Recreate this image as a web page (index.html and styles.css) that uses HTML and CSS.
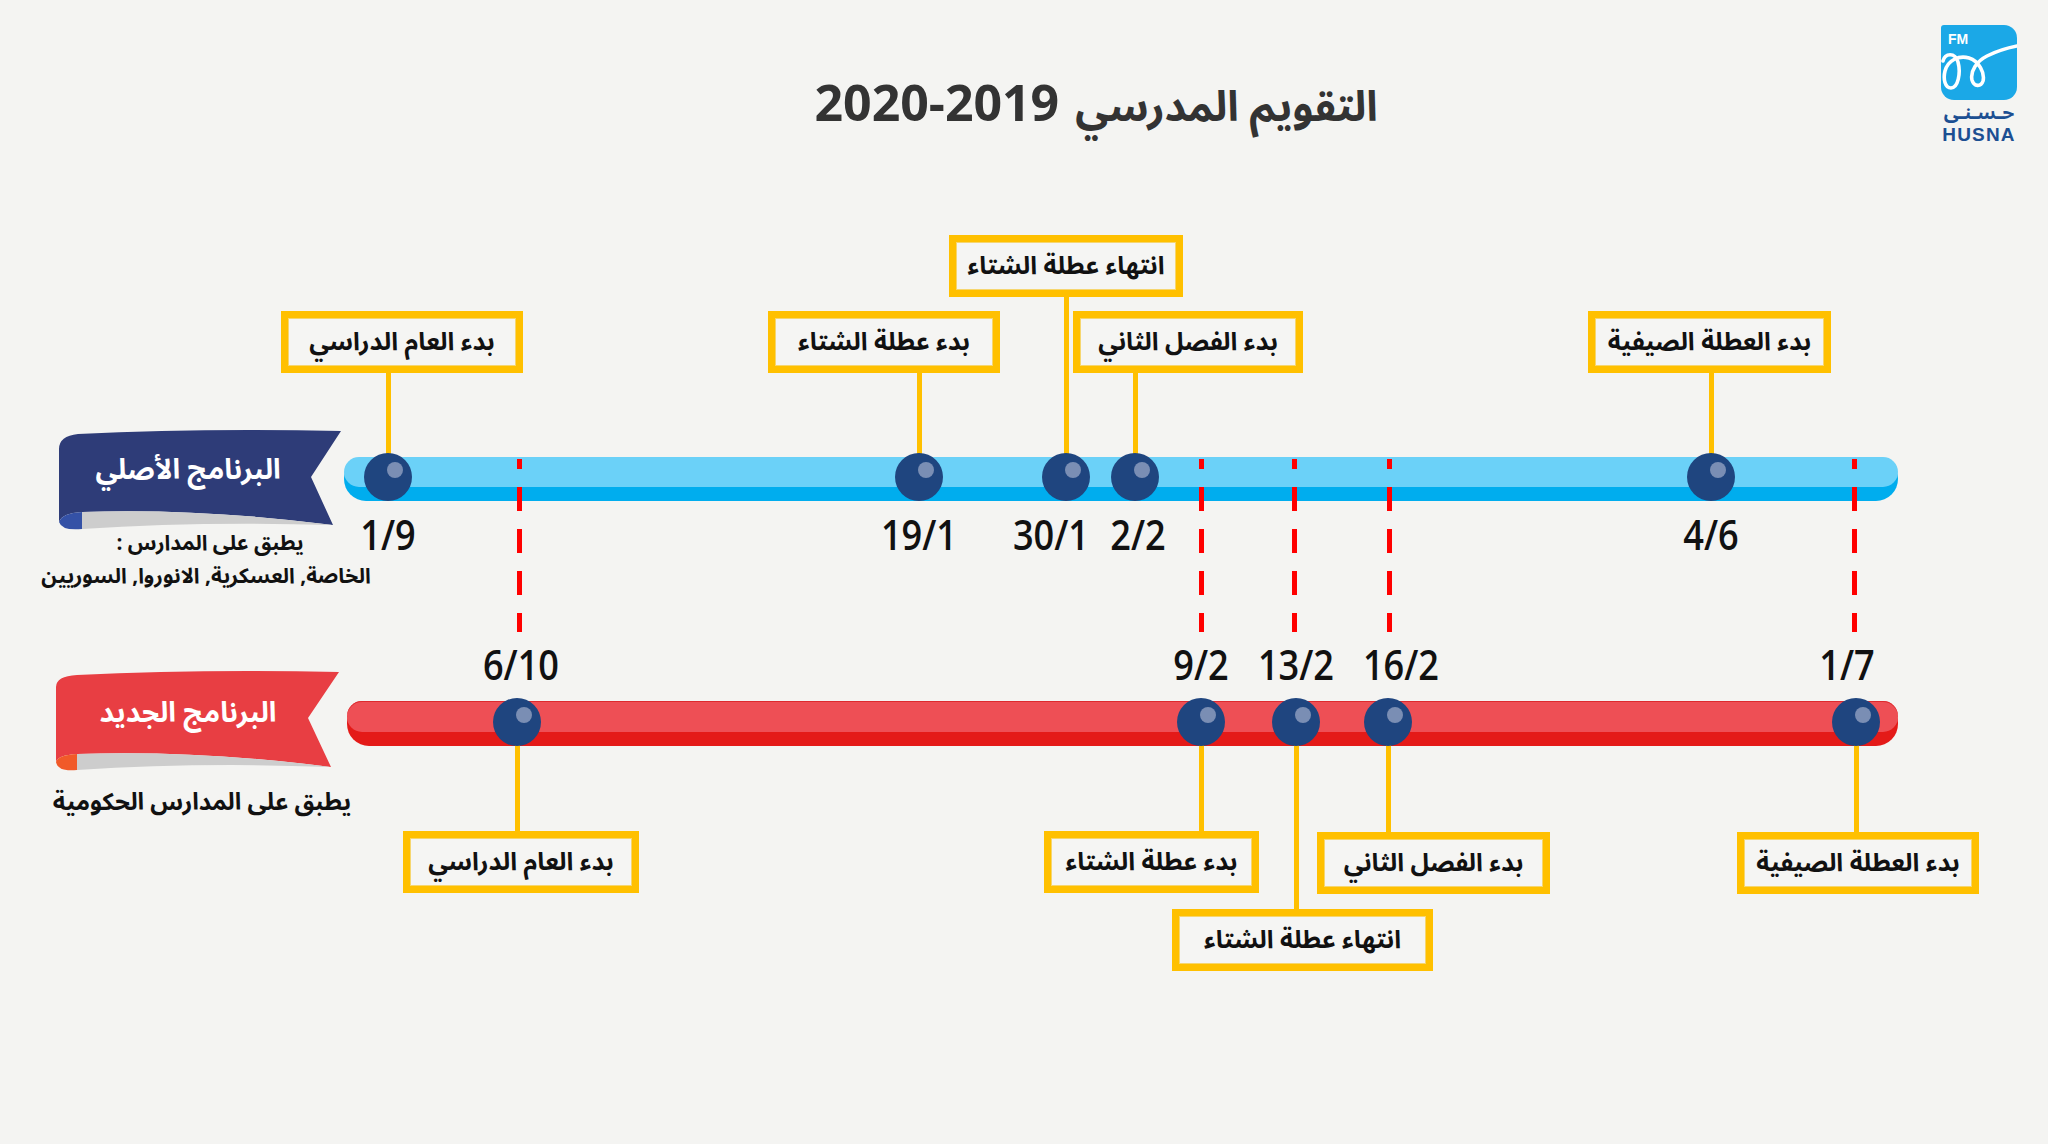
FILE: index.html
```html
<!DOCTYPE html>
<html lang="ar">
<head>
<meta charset="utf-8">
<title>التقويم المدرسي 2019-2020</title>
<link rel="stylesheet" href="styles.css">
</head>
<body>
<div class="page">
  <header class="header">
    <h1 class="title" dir="rtl"><span class="title-ar">التقويم المدرسي</span> <bdi class="title-num" dir="ltr">2020-2019</bdi></h1>
    <div class="logo">
      <div class="logo-mark">
        <span class="logo-fm">FM</span>
        <svg class="logo-loops" viewBox="0 0 76 75" aria-hidden="true">
          <path d="M2 36 C4 28 14 27 17 37 C20 48 17 63 10 63 C4 63 2 54 4 46 C7 35 18 30 28 33 C38 36 44 48 42 56 C40 62 33 62 31 55 C29 46 36 36 46 31 C56 26 66 23 76 21" fill="none" stroke="#fff" stroke-width="3.6" stroke-linecap="round"/>
        </svg>
      </div>
      <div class="logo-ar">حـسـنـى</div>
      <div class="logo-en">HUSNA</div>
    </div>
  </header>

  <main class="timeline">
    <div class="bar bar-blue"></div>
    <div class="bar bar-red"></div>

    <div class="dash d1"></div>
    <div class="dash d2"></div>
    <div class="dash d3"></div>
    <div class="dash d4"></div>
    <div class="dash d5"></div>

    <div class="ribbon ribbon-blue">
      <svg class="ribbon-svg" viewBox="50 425 300 110" aria-hidden="true">
        <path d="M59 449 Q59 436 78 434 Q200 428 341 431 L311 477 L333 525 Q200 508 82 512 Q62 513 59 522 Z" fill="#2e3c78"/>
        <path d="M82 512 Q200 508 333 525 Q200 521 82 529 Z" fill="#cdcdcd"/>
        <path d="M59 522 Q62 513 82 512 L82 529 Q62 531 59 522 Z" fill="#3451a6"/>
      </svg>
      <span class="ribbon-label">البرنامج الأصلي</span>
    </div>
    <div class="note note-blue" dir="rtl">
      <p class="note-l1">يطبق على المدارس :</p>
      <p class="note-l2">الخاصة, العسكرية, الانوروا, السوريين</p>
    </div>

    <div class="ribbon ribbon-red">
      <svg class="ribbon-svg" viewBox="50 665 300 110" aria-hidden="true">
        <path d="M56 687 Q56 676 77 675 Q200 669 339 672 L308 718 L331 767 Q200 750 77 754 Q58 755 56 762 Z" fill="#e83e43"/>
        <path d="M77 754 Q200 750 331 767 Q200 762 77 770 Z" fill="#cdcdcd"/>
        <path d="M56 762 Q58 755 77 754 L77 770 Q58 772 56 762 Z" fill="#f15a29"/>
      </svg>
      <span class="ribbon-label">البرنامج الجديد</span>
    </div>
    <div class="note note-red" dir="rtl">
      <p>يطبق على المدارس الحكومية</p>
    </div>

    <div class="mk top t1"><div class="stem"></div><div class="tag" dir="rtl">بدء العام الدراسي</div><div class="dot"></div><div class="date">1/9</div></div>
    <div class="mk top t2"><div class="stem"></div><div class="tag" dir="rtl">بدء عطلة الشتاء</div><div class="dot"></div><div class="date">19/1</div></div>
    <div class="mk top t3"><div class="stem"></div><div class="tag" dir="rtl">انتهاء عطلة الشتاء</div><div class="dot"></div><div class="date">30/1</div></div>
    <div class="mk top t4"><div class="stem"></div><div class="tag" dir="rtl">بدء الفصل الثاني</div><div class="dot"></div><div class="date">2/2</div></div>
    <div class="mk top t5"><div class="stem"></div><div class="tag" dir="rtl">بدء العطلة الصيفية</div><div class="dot"></div><div class="date">4/6</div></div>

    <div class="mk bottom b1"><div class="stem"></div><div class="tag" dir="rtl">بدء العام الدراسي</div><div class="dot"></div><div class="date">6/10</div></div>
    <div class="mk bottom b2"><div class="stem"></div><div class="tag" dir="rtl">بدء عطلة الشتاء</div><div class="dot"></div><div class="date">9/2</div></div>
    <div class="mk bottom b3"><div class="stem"></div><div class="tag" dir="rtl">انتهاء عطلة الشتاء</div><div class="dot"></div><div class="date">13/2</div></div>
    <div class="mk bottom b4"><div class="stem"></div><div class="tag" dir="rtl">بدء الفصل الثاني</div><div class="dot"></div><div class="date">16/2</div></div>
    <div class="mk bottom b5"><div class="stem"></div><div class="tag" dir="rtl">بدء العطلة الصيفية</div><div class="dot"></div><div class="date">1/7</div></div>
  </main>
</div>
</body>
</html>
```

FILE: styles.css
```css
* { box-sizing: border-box; margin: 0; padding: 0; }

html, body {
  width: 2048px;
  height: 1144px;
  overflow: hidden;
}

body {
  background: #f4f4f2;
  color: #111;
  font-family: "Noto Sans Arabic", "Noto Kufi Arabic", "DejaVu Sans", sans-serif;
}

.page {
  position: relative;
  width: 2048px;
  height: 1144px;
}

/* ---------- header ---------- */
.header {
  height: 160px;
  display: grid;
  grid-template-columns: 1fr auto 1fr;
  padding: 0 31px 0 173px;
}

.title {
  grid-column: 2;
  margin-top: 76px;
  font-family: "Open Sans", "Noto Sans Arabic", "DejaVu Sans", sans-serif;
  font-size: 51px;
  line-height: 1;
  font-weight: 700;
  color: #333;
  white-space: nowrap;
}

.title-ar {
  font-family: "Noto Sans Arabic", "DejaVu Sans", sans-serif;
  font-size: 42px;
}

.title-num {
  display: inline-block;
  transform: scaleX(0.98);
}

.logo {
  grid-column: 3;
  justify-self: end;
  margin-top: 25px;
  width: 76px;
  display: flex;
  flex-direction: column;
  align-items: center;
}

.logo-mark {
  position: relative;
  width: 76px;
  height: 75px;
  background: #1ba8e7;
  border-radius: 3px 13px 13px 13px;
}

.logo-fm {
  position: absolute;
  left: 7px;
  top: 7px;
  font-family: "Liberation Sans", Arial, sans-serif;
  font-weight: 700;
  font-size: 14px;
  line-height: 14px;
  color: #fff;
}

.logo-loops {
  position: absolute;
  inset: 0;
  width: 76px;
  height: 75px;
}

.logo-ar {
  margin-top: 5px;
  font-size: 19px;
  font-weight: 700;
  line-height: 16px;
  height: 16px;
  color: #1c4f92;
  white-space: nowrap;
}

.logo-en {
  margin-top: 5px;
  font-family: "Liberation Sans", Arial, sans-serif;
  font-weight: 700;
  font-size: 19px;
  line-height: 17px;
  letter-spacing: 1.2px;
  color: #1c4f92;
}

/* ---------- timeline canvas ---------- */
.timeline {
  position: relative;
  height: 984px;
}

.bar {
  position: absolute;
  border-radius: 22px;
}

.bar::before {
  content: "";
  position: absolute;
  left: 0;
  right: 0;
  top: 0;
  border-radius: 15px;
}

.bar-blue {
  left: 344px;
  top: 297px;
  width: 1554px;
  height: 44px;
  background: #00adee;
}

.bar-blue::before {
  height: 30px;
  background: #6bd1f8;
}

.bar-red {
  left: 347px;
  top: 541px;
  width: 1551px;
  height: 45px;
  background: #e41a18;
}

.bar-red::before {
  height: 31px;
  background: #ee4f55;
  box-shadow: inset 0 1px 0 #dd2a2e;
}

.dash {
  position: absolute;
  top: 299px;
  left: calc(var(--x) - 2px);
  width: 5px;
  height: 173px;
  background: repeating-linear-gradient(to bottom, #ff0000 0 24px, transparent 24px 42px);
  background-position: 0 -14px;
}

.d1 { --x: 519px; }
.d2 { --x: 1201px; }
.d3 { --x: 1294px; }
.d4 { --x: 1389px; }
.d5 { --x: 1854px; }

/* ---------- ribbons ---------- */
.ribbon {
  position: absolute;
  left: 50px;
  width: 300px;
  height: 110px;
}

.ribbon-blue { top: 265px; }
.ribbon-red { top: 505px; }

.ribbon-svg {
  position: absolute;
  inset: 0;
  width: 300px;
  height: 110px;
}

.ribbon-label {
  position: absolute;
  left: 12px;
  width: 252px;
  display: flex;
  align-items: center;
  justify-content: center;
  color: #fff;
  font-weight: 700;
  font-size: 28px;
  white-space: nowrap;
  direction: rtl;
}

.ribbon-blue .ribbon-label { top: 20px; height: 50px; }
.ribbon-red .ribbon-label { top: 23px; height: 50px; }

.note {
  position: absolute;
  text-align: center;
  font-weight: 700;
  white-space: nowrap;
  color: #111;
}

.note-blue {
  left: 16px;
  width: 380px;
  top: 367px;
  font-size: 21px;
  line-height: 33px;
}

.note-l1 { padding-left: 8px; }

.note-red {
  left: 22px;
  width: 360px;
  top: 626px;
  font-size: 24px;
  line-height: 34px;
}

/* ---------- markers ---------- */
.mk {
  position: absolute;
  top: 0;
  left: var(--x);
  width: 0;
  height: 100%;
}

.stem {
  position: absolute;
  left: -2px;
  width: 5px;
  background: #ffc000;
}

.tag {
  position: absolute;
  left: var(--bl);
  width: var(--bw);
  top: var(--bt);
  height: 62px;
  display: flex;
  align-items: center;
  justify-content: center;
  border: 7px solid #ffc000;
  background: #f5f5f3;
  box-shadow: inset 0 0 0 1px #f6d66f;
  font-size: 25px;
  font-weight: 700;
  white-space: nowrap;
  color: #111;
}

.dot {
  position: absolute;
  left: -24px;
  width: 48px;
  height: 48px;
  border-radius: 50%;
  background: #1f457f;
}

.dot::after {
  content: "";
  position: absolute;
  left: 23px;
  top: 9px;
  width: 16px;
  height: 16px;
  border-radius: 50%;
  background: #7a8eb4;
}

.date {
  position: absolute;
  left: calc(var(--dx, 0px) - 100px);
  width: 200px;
  text-align: center;
  font-family: "Open Sans", "DejaVu Sans", sans-serif;
  font-size: 42px;
  font-weight: 600;
  line-height: 1;
  color: #111;
  transform: scaleX(0.86);
}

.top .stem {
  top: calc(var(--bt) + 62px);
  height: calc(317px - var(--bt) - 62px);
}

.top .dot { top: 293px; }
.top .date { top: 353px; }

.bottom .stem {
  top: 562px;
  height: calc(var(--bt) - 562px);
}

.bottom .dot { top: 538px; }
.bottom .date { top: 483px; }

.t1 { --x: 388px;  --bl: -107px; --bw: 242px; --bt: 151px; }
.t2 { --x: 919px;  --bl: -151px; --bw: 232px; --bt: 151px; }
.t3 { --x: 1066px; --bl: -117px; --bw: 234px; --bt: 75px;  --dx: -15px; }
.t4 { --x: 1135px; --bl: -62px;  --bw: 230px; --bt: 151px; --dx: 3px; }
.t5 { --x: 1711px; --bl: -123px; --bw: 243px; --bt: 151px; }

.b1 { --x: 517px;  --bl: -114px; --bw: 236px; --bt: 671px; --dx: 4px; }
.b2 { --x: 1201px; --bl: -157px; --bw: 215px; --bt: 671px; }
.b3 { --x: 1296px; --bl: -124px; --bw: 261px; --bt: 749px; }
.b4 { --x: 1388px; --bl: -71px;  --bw: 233px; --bt: 672px; --dx: 13px; }
.b5 { --x: 1856px; --bl: -119px; --bw: 242px; --bt: 672px; --dx: -9px; }
```
